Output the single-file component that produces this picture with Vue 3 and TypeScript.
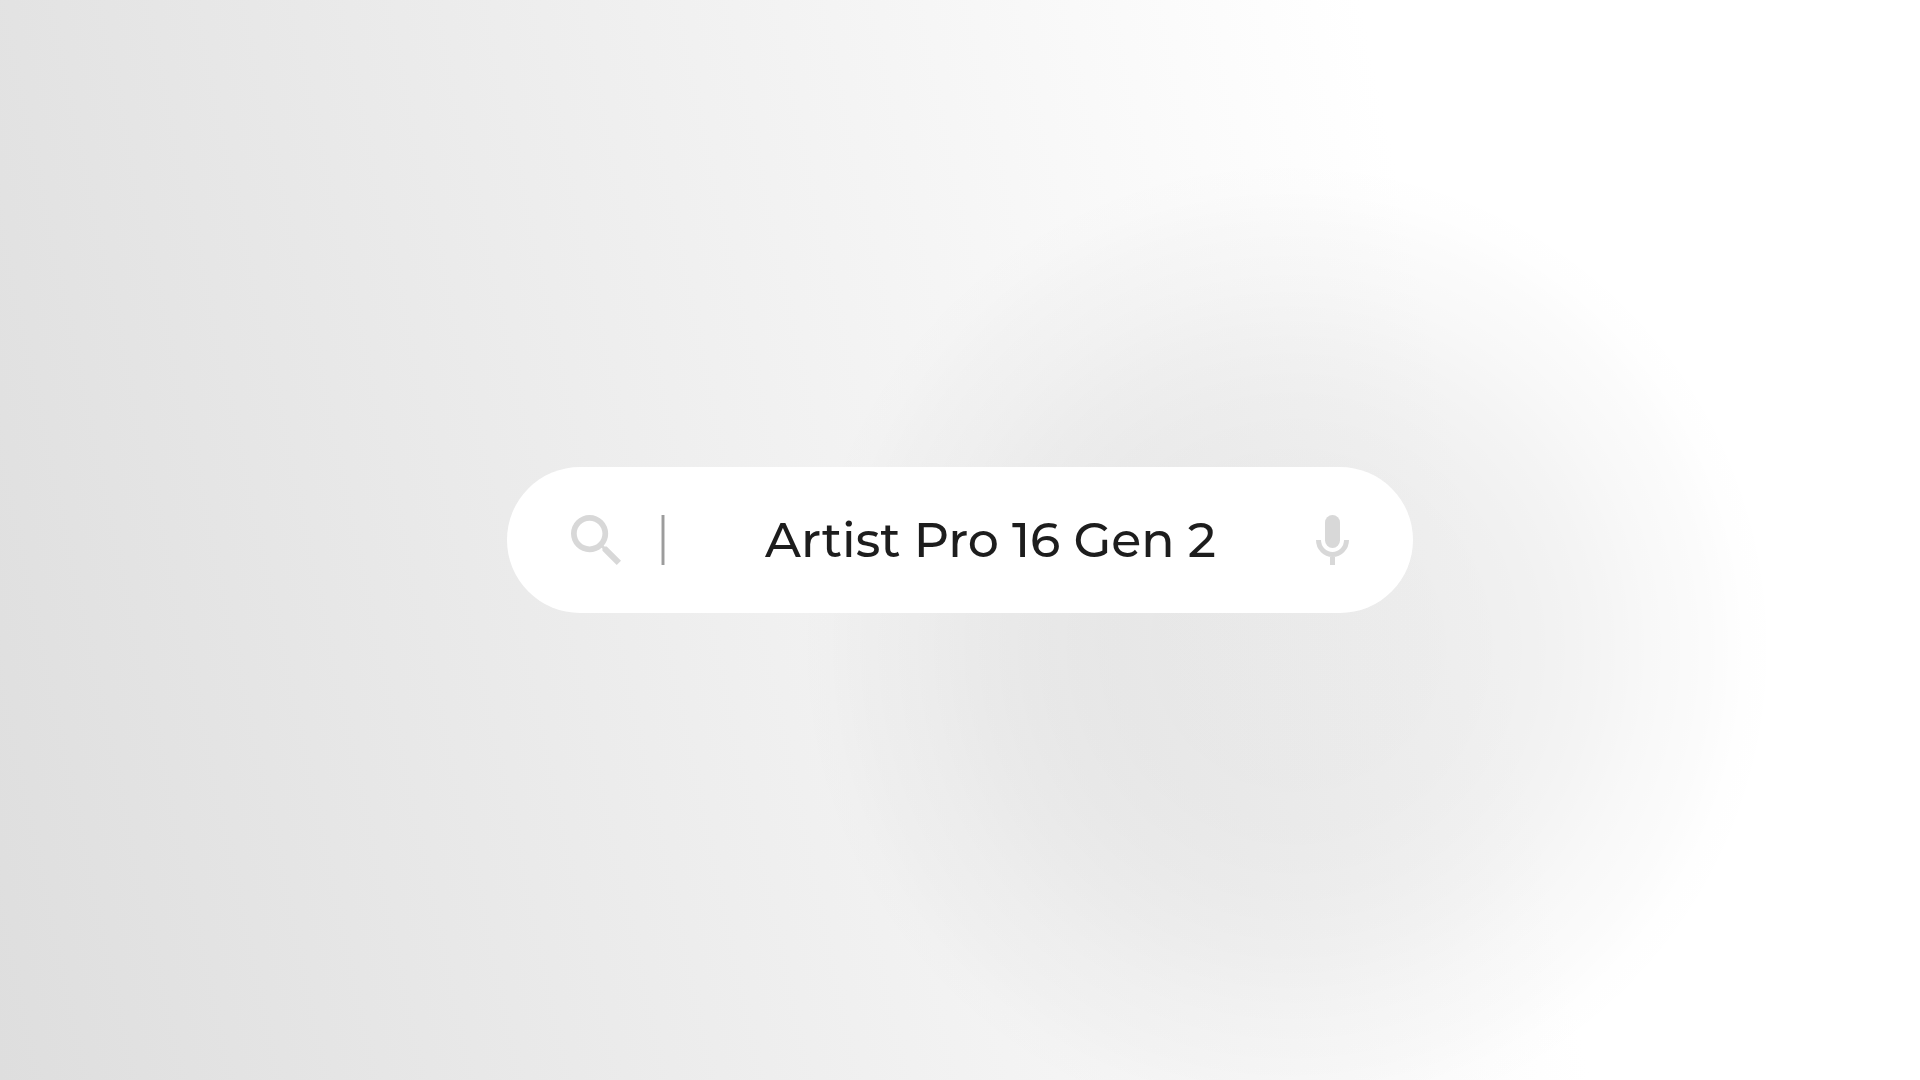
<script setup lang="ts">
import { ref } from 'vue'

const query = ref<string>('Artist Pro 16 Gen 2')
</script>

<template>
  <main class="stage">
    <form class="search" role="search" @submit.prevent>
      <button class="icon-button" type="submit" aria-label="Search">
        <svg width="50" height="50" viewBox="3 3 17.49 17.49" fill="currentColor" aria-hidden="true">
          <path d="M15.5 14h-.79l-.28-.27A6.471 6.471 0 0 0 16 9.5 6.5 6.5 0 1 0 9.5 16c1.61 0 3.09-.59 4.23-1.57l.27.28v.79l5 4.99L20.49 19l-4.99-5zm-6 0C7.01 14 5 11.99 5 9.5S7.01 5 9.5 5 14 7.01 14 9.5 11.99 14 9.5 14z" />
        </svg>
      </button>
      <span class="divider"></span>
      <input v-model="query" class="query" type="text" aria-label="Search query" autocomplete="off" spellcheck="false" />
      <button class="icon-button" type="button" aria-label="Search by voice">
        <svg width="33" height="50" viewBox="0 0 33 50" aria-hidden="true">
          <rect x="9" y="0" width="15" height="33" rx="7.5" fill="currentColor" />
          <path d="M2.5 25a14 14.5 0 0 0 28 0M16.5 39.5V50" fill="none" stroke="currentColor" stroke-width="5" />
        </svg>
      </button>
    </form>
  </main>
</template>

<style>
body {
  margin: 0;
}
</style>

<style scoped>
.stage {
  display: flex;
  align-items: center;
  justify-content: center;
  min-height: 100vh;
  background:
    radial-gradient(
      circle at 67% 60%,
      rgba(0, 0, 0, 0.068) 0,
      rgba(0, 0, 0, 0.066) 7vw,
      rgba(0, 0, 0, 0.062) 10vw,
      rgba(0, 0, 0, 0.055) 13vw,
      rgba(0, 0, 0, 0.044) 16vw,
      rgba(0, 0, 0, 0.029) 19vw,
      rgba(0, 0, 0, 0.014) 22vw,
      rgba(0, 0, 0, 0.005) 24vw,
      rgba(0, 0, 0, 0) 26vw
    ),
    linear-gradient(78deg, #dedede 0%, #ffffff 74%);
}

.search {
  display: flex;
  align-items: center;
  box-sizing: border-box;
  width: 100%;
  max-width: 906px;
  height: 146px;
  padding: 0 64px;
  border-radius: 73px;
  background: #ffffff;
}

.icon-button {
  display: flex;
  flex: none;
  padding: 0;
  border: 0;
  background: none;
  color: #d8d8d8;
  cursor: pointer;
}

.divider {
  flex: none;
  box-sizing: border-box;
  width: 4px;
  height: 50px;
  margin-left: 40px;
  border: solid #d0d0d0;
  border-width: 0 1px;
  background: #9c9c9c;
}

.query {
  flex: 1;
  min-width: 0;
  height: 64px;
  padding: 0;
  border: 0;
  outline: 0;
  background: transparent;
  color: #1d1d1d;
  font-family: Montserrat, Lato, sans-serif;
  font-size: 49px;
  font-weight: 500;
  line-height: 64px;
  text-align: center;
}
</style>
